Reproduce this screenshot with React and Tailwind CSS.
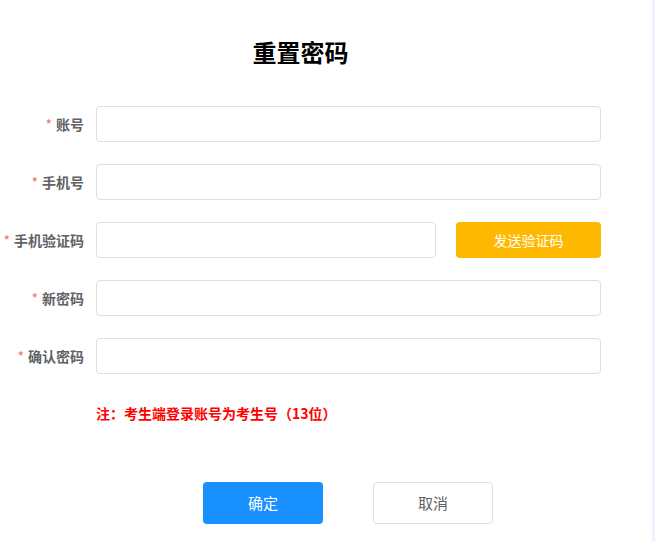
import React from "react";

const font = { fontFamily: '"Microsoft YaHei", "Noto Sans CJK SC", "Liberation Sans", sans-serif' };

function Label({ text }) {
  return (
    <div className="w-[84px] shrink-0 whitespace-nowrap text-right text-[14px] font-bold leading-[36px] text-[#606266]">
      <span className="mr-[4px] font-normal text-[#f56c6c]">*</span>
      {text}
    </div>
  );
}

function Row({ text, children }) {
  return (
    <div className="mb-[22px] flex h-[36px] items-center">
      <Label text={text} />
      <div className="ml-[12px] flex h-[36px] flex-1 items-center">{children}</div>
    </div>
  );
}

function Input({ className = "" }) {
  return (
    <input
      className={`h-[36px] rounded-[4px] border border-[#dcdfe6] bg-white px-[15px] text-[14px] outline-none ${className}`}
    />
  );
}

export default function App() {
  return (
    <div className="flex h-[542px] w-[655px]" style={font}>
      <div className="w-[652px] bg-white">
        <h1 className="mt-[36px] w-[601px] text-center text-[24px] font-bold leading-[32px] text-black">
          重置密码
        </h1>
        <div className="mt-[38px] w-[601px]">
          <Row text="账号">
            <Input className="w-full" />
          </Row>
          <Row text="手机号">
            <Input className="w-full" />
          </Row>
          <Row text="手机验证码">
            <Input className="w-[340px]" />
            <button className="ml-[20px] h-[36px] w-[145px] rounded-[4px] bg-[#ffb800] text-[14px] text-white">
              发送验证码
            </button>
          </Row>
          <Row text="新密码">
            <Input className="w-full" />
          </Row>
          <Row text="确认密码">
            <Input className="w-full" />
          </Row>
          <div className="ml-[96px] mt-[29px] text-[14px] font-bold leading-[20px] text-[#ff0000]">
            注：考生端登录账号为考生号（13位）
          </div>
        </div>
        <div className="ml-[203px] mt-[59px] flex gap-[50px]">
          <button className="h-[42px] w-[120px] rounded-[4px] bg-[#1890ff] text-[15px] text-white">
            确定
          </button>
          <button className="h-[42px] w-[120px] rounded-[4px] border border-[#dcdfe6] bg-white text-[15px] text-[#606266]">
            取消
          </button>
        </div>
      </div>
      <div className="flex-1 bg-[#eef4fd]" />
    </div>
  );
}
